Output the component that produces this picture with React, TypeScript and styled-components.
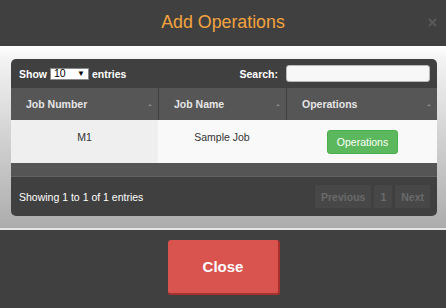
import React from "react";
import styled, { createGlobalStyle } from "styled-components";

const GlobalStyle = createGlobalStyle`
  html, body {
    margin: 0;
    padding: 0;
    background: #404040;
  }
  body {
    font-family: "Liberation Sans", Arial, sans-serif;
  }
`;

const Modal = styled.div`
  display: flex;
  flex-direction: column;
  width: 446px;
  height: 308px;
  overflow: hidden;
`;

const Header = styled.div`
  position: relative;
  height: 46px;
  flex: none;
  background: #404040;
  display: flex;
  align-items: center;
  justify-content: center;
`;

const Title = styled.h4`
  margin: 0 0 1px;
  font-size: 17.8px;
  font-weight: normal;
  color: #f3a43e;
`;

const CloseX = styled.span`
  position: absolute;
  top: 13px;
  right: 9px;
  width: 9px;
  height: 9px;
  opacity: 0.35;
`;

const Body = styled.div`
  flex: 1;
  padding: 13px 9px 0 11px;
  background: linear-gradient(to bottom, #ffffff 0%, #f2f2f2 8%, #acacac 100%);
`;

const TableWrap = styled.div`
  background: #404040;
  border-radius: 5px;
  overflow: hidden;
  color: #ffffff;
  font-size: 10.5px;
`;

const Toolbar = styled.div`
  height: 29px;
  display: flex;
  align-items: center;
  justify-content: space-between;
  padding: 0 7px 0 8px;
  font-weight: bold;
`;

const Label = styled.label`
  display: flex;
  align-items: center;
  gap: 3px;
`;

const FakeSelect = styled.span`
  display: inline-flex;
  align-items: center;
  justify-content: space-between;
  width: 39px;
  height: 12px;
  padding: 0 3px 0 3px;
  box-sizing: border-box;
  border: 1px solid #8a8a8a;
  background: #ffffff;
  color: #000000;
  font-weight: normal;
  font-size: 10.5px;
  line-height: 11px;

  &::after {
    content: "▼";
    font-size: 8px;
  }
`;

const SearchInput = styled.input`
  width: 144px;
  height: 17px;
  box-sizing: border-box;
  border: 1px solid #b8b8b8;
  border-radius: 3px;
  background: #f7f7f7;
  margin-left: 5px;
  padding: 0 4px;
`;

const Grid = styled.div`
  display: grid;
  grid-template-columns: 147px 128px 1fr;
`;

const HeadCell = styled.div<{ $first?: boolean }>`
  height: 32px;
  display: flex;
  align-items: center;
  justify-content: space-between;
  padding: 0 6px 0 15px;
  box-sizing: border-box;
  background: #565656;
  color: #e6e6e6;
  font-weight: bold;
  border-left: ${({ $first }) => ($first ? "none" : "1px solid #3e3e3e")};

  &::after {
    content: "";
    margin-top: 2px;
    border-left: 2px solid transparent;
    border-right: 2px solid transparent;
    border-bottom: 2px solid #8a8a8a;
  }
`;

const Cell = styled.div<{ $shade?: boolean }>`
  height: 43px;
  box-sizing: border-box;
  padding: 10px 8px 0;
  line-height: 14px;
  text-align: center;
  color: #333333;
  background: ${({ $shade }) => ($shade ? "#efefef" : "#f9f9f9")};
`;

const OpsButton = styled.button`
  width: 71px;
  height: 24px;
  border: 1px solid #4cae4c;
  border-radius: 3px;
  background: #5cb85c;
  color: #ffffff;
  font-family: inherit;
  font-size: 10.5px;
  margin-left: 2px;
  padding: 0;
`;

const TableEnd = styled.div`
  height: 13px;
  background: #555555;
  border-bottom: 1px solid #626262;
`;

const InfoBar = styled.div`
  height: 39px;
  display: flex;
  align-items: center;
  justify-content: space-between;
  padding: 0 7px 0 8px;
  box-sizing: border-box;
`;

const Pager = styled.div`
  display: flex;
  gap: 3px;
`;

const PageButton = styled.span`
  height: 23px;
  padding: 0 6px;
  display: flex;
  align-items: center;
  border-radius: 2px;
  background: #474747;
  color: #6a6a6a;
  font-weight: bold;
`;

const Footer = styled.div`
  height: 68px;
  flex: none;
  border-top: 2px solid #e4e4e4;
  background: #404040;
  display: flex;
  justify-content: center;
  align-items: flex-start;
  padding-top: 10px;
`;

const CloseButton = styled.button`
  width: 112px;
  height: 55px;
  box-sizing: border-box;
  border: none;
  border-radius: 3px;
  border-right: 2px solid #a9302c;
  border-bottom: 2px solid #a9302c;
  background: #d9534f;
  color: #ffffff;
  font-family: inherit;
  font-size: 15px;
  font-weight: bold;
  margin-left: 2px;
`;

export default function App() {
  return (
    <>
      <GlobalStyle />
      <Modal>
        <Header>
          <Title>Add Operations</Title>
          <CloseX>
            <svg width="9" height="9" viewBox="0 0 9 9">
              <path d="M1 1 L8 8 M8 1 L1 8" stroke="#888" strokeWidth="2" />
            </svg>
          </CloseX>
        </Header>
        <Body>
          <TableWrap>
            <Toolbar>
              <Label>
                Show <FakeSelect>10</FakeSelect> entries
              </Label>
              <Label>
                Search:
                <SearchInput type="text" />
              </Label>
            </Toolbar>
            <Grid>
              <HeadCell $first>Job Number</HeadCell>
              <HeadCell>Job Name</HeadCell>
              <HeadCell>Operations</HeadCell>
              <Cell $shade>M1</Cell>
              <Cell>Sample Job</Cell>
              <Cell>
                <OpsButton>Operations</OpsButton>
              </Cell>
            </Grid>
            <TableEnd />
            <InfoBar>
              <span>Showing 1 to 1 of 1 entries</span>
              <Pager>
                <PageButton>Previous</PageButton>
                <PageButton>1</PageButton>
                <PageButton>Next</PageButton>
              </Pager>
            </InfoBar>
          </TableWrap>
        </Body>
        <Footer>
          <CloseButton>Close</CloseButton>
        </Footer>
      </Modal>
    </>
  );
}
